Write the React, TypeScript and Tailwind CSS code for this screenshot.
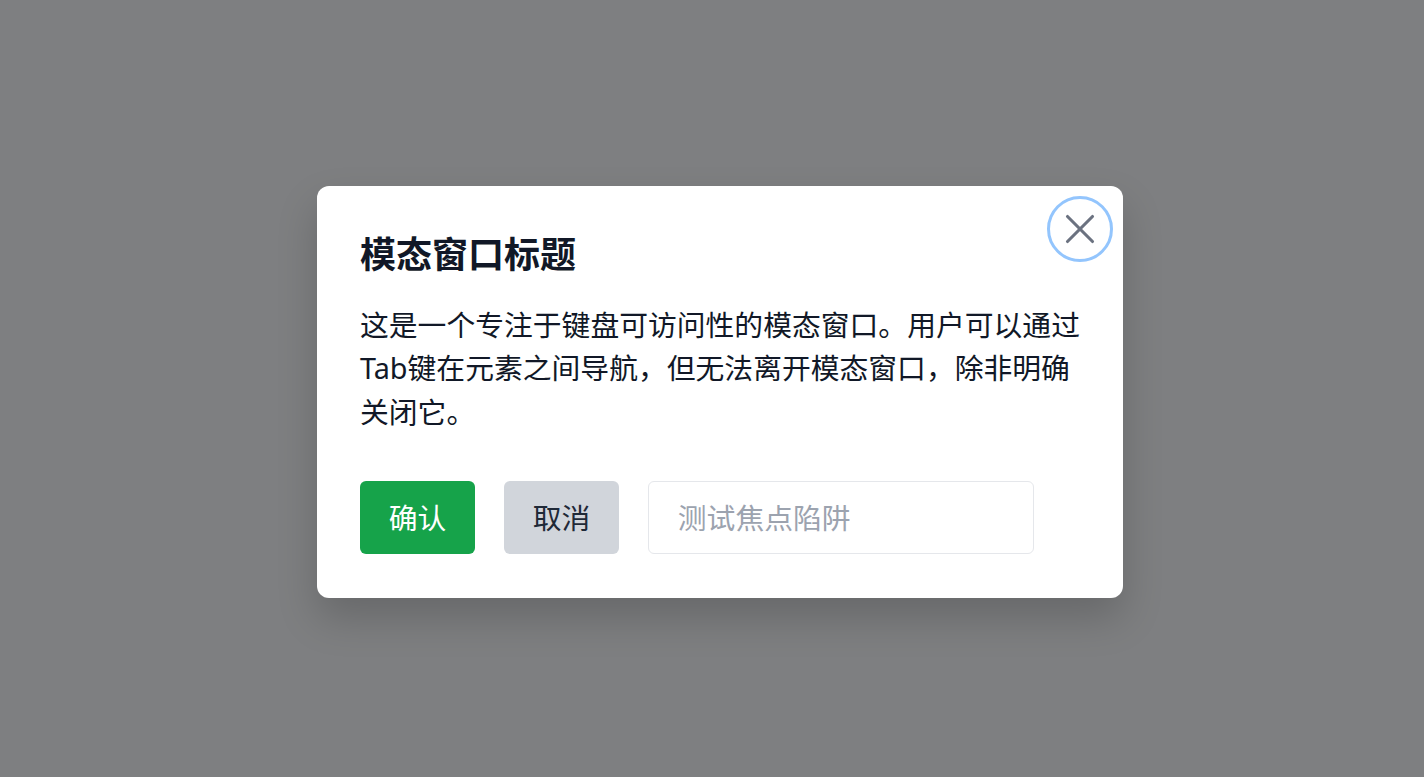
import { X } from "lucide-react";

export default function App() {
  return (
    <div
      className="min-h-screen w-full bg-[#7e7f81] flex items-center justify-center pl-4 pt-[7px]"
      style={{ fontFamily: '"Noto Sans", "Noto Sans CJK SC", sans-serif' }}
    >
      {/* Modal */}
      <div className="relative w-[806px] bg-white rounded-xl shadow-[0_20px_40px_rgba(0,0,0,0.18)] px-[43px] pt-[43px] pb-[44px]">
        <button className="absolute top-[10px] right-[10px] w-[66px] h-[66px] rounded-full border-[3px] border-[#93c5fd] flex items-center justify-center text-[#6b7280]">
          <X className="w-[50px] h-[50px]" strokeWidth={1.5} />
        </button>

        <h2 className="text-[36px] leading-[51px] font-bold text-[#111827]">
          模态窗口标题
        </h2>
        <p className="mt-[23px] text-[28.8px] leading-[43.2px] text-[#111827]">
          这是一个专注于键盘可访问性的模态窗口。用户可以通过Tab键在元素之间导航，但无法离开模态窗口，除非明确关闭它。
        </p>

        <div className="mt-[48px] flex items-center gap-[28.8px]">
          <button className="h-[73px] px-[28.8px] rounded-md bg-[#16a34a] text-white text-[28.8px]">
            确认
          </button>
          <button className="h-[73px] px-[28.8px] rounded-md bg-[#d1d5db] text-[#1f2937] text-[28.8px]">
            取消
          </button>
          <input
            type="text"
            placeholder="测试焦点陷阱"
            className="h-[73px] w-[386px] px-[28.8px] rounded-md border border-[#e5e7eb] text-[28.8px] placeholder:text-[#9ca3af] outline-none"
          />
        </div>
      </div>
    </div>
  );
}
